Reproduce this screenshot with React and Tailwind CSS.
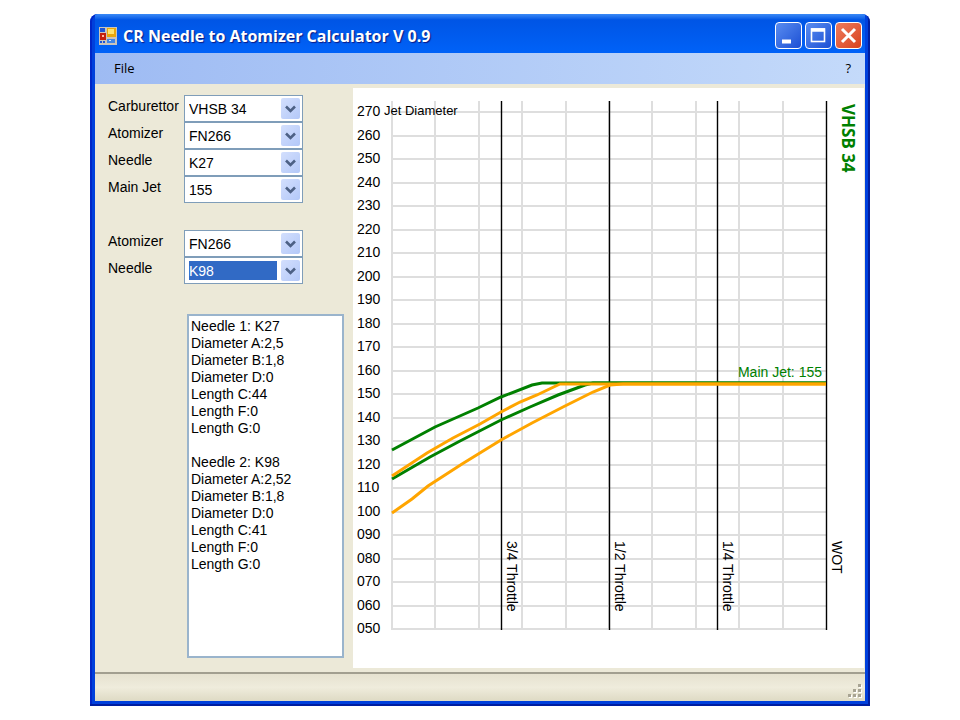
import React, { useState } from "react";

const CARBS = ["VHSB 34", "VHSB 36", "VHSB 38"];
const ATOMIZERS = ["FN266", "FN264", "FN268"];
const NEEDLES = ["K27", "K98", "K33"];
const JETS = ["155", "150", "160"];

const REPORT = `Needle 1: K27
Diameter A:2,5
Diameter B:1,8
Diameter D:0
Length C:44
Length F:0
Length G:0

Needle 2: K98
Diameter A:2,52
Diameter B:1,8
Diameter D:0
Length C:41
Length F:0
Length G:0`;

const AppIcon = () => (
  <svg width="18" height="18" viewBox="0 0 18 18" shapeRendering="crispEdges" aria-hidden="true">
    <rect width="18" height="18" fill="#c9c4bb" />
    <rect x="1" y="1" width="5" height="4" fill="#1c55d8" />
    <rect x="1" y="6" width="6" height="7" fill="#c3200f" />
    <rect x="3" y="8" width="2" height="2" fill="#ffb9a0" />
    <rect x="8" y="1" width="9" height="9" fill="#e8a70c" />
    <rect x="9" y="2" width="6" height="5" fill="#ffe36b" />
    <rect x="8" y="12" width="8" height="4" fill="#3f86e8" />
    <rect x="10" y="13" width="2" height="1" fill="#d6e6ff" />
    <rect x="1" y="14" width="2" height="2" fill="#1c55d8" />
    <rect x="4" y="14" width="2" height="2" fill="#1c55d8" />
  </svg>
);

const TitleBar = () => (
  <header className="flex h-[39px] items-center justify-between bg-linear-to-b from-[#3a8af6] via-[#0055e5] via-15% to-[#0062f8] pt-1 pr-[3px] pl-1">
    <div className="flex items-center gap-[6px]">
      <AppIcon />
      <h1 className="font-['Open_Sans',sans-serif] text-[16px] leading-6 font-bold text-white [text-shadow:1px_1px_1px_#0a1883]">
        CR Needle to Atomizer Calculator V 0.9
      </h1>
    </div>
    <div className="flex gap-[3px]">
      <button
        aria-label="Minimize"
        className="size-[27px] rounded border border-white bg-linear-to-br from-[#5a8cf0] to-[#1c4ed4]"
      >
        <svg viewBox="0 0 25 25" aria-hidden="true">
          <path d="M6 18.5h9" stroke="#fff" strokeWidth="4" />
        </svg>
      </button>
      <button
        aria-label="Maximize"
        className="size-[27px] rounded border border-white bg-linear-to-br from-[#5a8cf0] to-[#1c4ed4]"
      >
        <svg viewBox="0 0 25 25" fill="none" stroke="#fff" aria-hidden="true">
          <rect x="5.5" y="6" width="13" height="12.5" strokeWidth="1.6" />
          <path d="M5 7h14" strokeWidth="3.5" />
        </svg>
      </button>
      <button
        aria-label="Close"
        className="size-[27px] rounded border border-white bg-linear-to-br from-[#ee7b5c] to-[#d8401a]"
      >
        <svg viewBox="0 0 25 25" aria-hidden="true">
          <path d="M6 6l13 13M19 6L6 19" stroke="#fff" strokeWidth="3" />
        </svg>
      </button>
    </div>
  </header>
);

const ComboRow = ({ id, label, options, initial, selected }) => {
  const [value, setValue] = useState(initial);

  return (
    <div className="flex h-[27px]">
      <label htmlFor={id} className="w-[76px] leading-[22px]">
        {label}
      </label>
      <div className="relative w-[119px] border border-[#7f9db9] bg-white">
        <select
          id={id}
          value={value}
          onChange={(e) => setValue(e.target.value)}
          className={`block h-full w-full appearance-none bg-clip-content py-[3px] pr-[25px] pl-[4px] outline-none ${
            selected ? "bg-[#316ac5] text-white" : "bg-white text-black"
          }`}
        >
          {options.map((o) => (
            <option key={o}>{o}</option>
          ))}
        </select>
        <span className="pointer-events-none absolute inset-y-[2px] right-[2px] flex w-[19px] items-center justify-center rounded-xs bg-linear-to-br from-[#d3dffd] to-[#b3c8f8]">
          <svg width="11" height="8" viewBox="0 0 11 8" fill="none" aria-hidden="true">
            <path d="M1 1.5l4.5 4.5L10 1.5" stroke="#4d6185" strokeWidth="2.6" />
          </svg>
        </span>
      </div>
    </div>
  );
};

const diameters = Array.from({ length: 23 }, (_, i) => 50 + i * 10);
const columns = [39, 82, 126, 169, 213, 256, 299, 343, 386, 430];
const throttles = [
  { x: 148, label: "3/4 Throttle" },
  { x: 256, label: "1/2 Throttle" },
  { x: 364, label: "1/4 Throttle" },
  { x: 473, label: "WOT" },
];
const toY = (v) => Math.round(541 - (v - 50) * 2.35);

const curves = [
  { color: "#008000", points: "39,362 82,339 125,320 148,309 179,297 189,295 473,295" },
  { color: "#008000", points: "39,391 77,369 107,353 148,332 177,319 205,307 232,297 240,295 473,295" },
  { color: "#ffa500", points: "39,388 74,365 100,350 127,336 148,324 167,314 184,307 207,296 473,296" },
  { color: "#ffa500", points: "39,425 59,411 75,398 92,387 109,376 148,352 179,335 210,319 240,304 257,297 270,296 473,296" },
];

const Chart = () => (
  <svg
    viewBox="0 0 511 580"
    className="block h-auto w-full bg-white font-['Liberation_Sans',Arial,sans-serif] text-[14px]"
    role="img"
    aria-label="Jet diameter by throttle position"
  >
    {/* grid */}
    <g stroke="#dedede" strokeWidth="2" shapeRendering="crispEdges">
      {diameters.map((d) => (
        <path key={d} d={`M39 ${toY(d)}H473`} />
      ))}
      {columns.map((x) => (
        <path key={x} d={`M${x} 13V542`} />
      ))}
    </g>

    {diameters.map((d) => (
      <text key={d} x="4" y={toY(d) + 4}>
        {String(d).padStart(3, "0")}
      </text>
    ))}
    <text x="31" y="27" fontSize="13">Jet Diameter</text>

    {/* throttle marks */}
    {throttles.map((t) => (
      <g key={t.label}>
        <path d={`M${t.x + 0.5} 13V542`} stroke="#000" strokeWidth="1.4" />
        <text transform={`translate(${t.x + 6} 453) rotate(90)`}>{t.label}</text>
      </g>
    ))}

    {curves.map((c) => (
      <polyline key={c.points} points={c.points} fill="none" stroke={c.color} strokeWidth="3" />
    ))}

    <text x="469" y="289" textAnchor="end" fill="#008000">Main Jet: 155</text>
    <text
      transform="translate(489 16) rotate(90)"
      fill="#008000"
      fontSize="17"
      fontWeight="700"
      className="font-['Noto_Sans',sans-serif]"
    >
      VHSB 34
    </text>
  </svg>
);

const StatusBar = () => (
  <footer className="flex h-[29px] items-end justify-end border-t-2 border-[#a29f90] bg-linear-to-b from-[#e6e2d0] via-[#efecdc] to-[#dedac4] p-[3px]">
    <svg width="14" height="14" viewBox="0 0 14 14" shapeRendering="crispEdges" aria-hidden="true">
      {[[10, 0], [5, 5], [10, 5], [0, 10], [5, 10], [10, 10]].map(([x, y]) => (
        <g key={`${x}-${y}`}>
          <rect x={x + 1} y={y + 1} width="3" height="3" fill="#fff" />
          <rect x={x} y={y} width="3" height="3" fill="#a8a493" />
        </g>
      ))}
    </svg>
  </footer>
);

const App = () => {
  return (
    <div className="min-h-screen bg-white px-4 py-[14px] font-['Liberation_Sans',Arial,sans-serif] text-[14px] text-black">
      <div className="mx-auto max-w-[780px] overflow-hidden rounded-t-lg bg-[#0040dc] px-[5px] pb-[5px] shadow-[inset_-2px_-2px_0_#001ea0,inset_2px_0_0_#0026c8]">
        <TitleBar />

        <nav className="flex h-[31px] items-center justify-between bg-linear-to-r from-[#9ebbf3] to-[#c4dafa] pr-[14px] pl-[19px] font-['Open_Sans',sans-serif] text-[13px]">
          <button>File</button>
          <button aria-label="Help">?</button>
        </nav>

        <main className="flex bg-[#ece9d8] py-1 pr-px">
          <div className="w-[258px] shrink-0 pt-[7px] pl-[13px]">
            <ComboRow id="carb" label="Carburettor" options={CARBS} initial="VHSB 34" />
            <ComboRow id="atomizer1" label="Atomizer" options={ATOMIZERS} initial="FN266" />
            <ComboRow id="needle1" label="Needle" options={NEEDLES} initial="K27" />
            <ComboRow id="jet" label="Main Jet" options={JETS} initial="155" />

            <div className="mt-[27px]">
              <ComboRow id="atomizer2" label="Atomizer" options={ATOMIZERS} initial="FN266" />
              <ComboRow id="needle2" label="Needle" options={NEEDLES} initial="K98" selected />
            </div>

            <textarea
              readOnly
              aria-label="Needle data"
              value={REPORT}
              className="mt-[30px] ml-[79px] block h-[344px] w-[157px] resize-none border-2 border-[#9ab4cc] bg-white px-[2px] py-[2px] leading-[17px] outline-none"
            />
          </div>

          <div className="min-w-0 flex-1">
            <Chart />
          </div>
        </main>

        <StatusBar />
      </div>
    </div>
  );
};

export default App;
